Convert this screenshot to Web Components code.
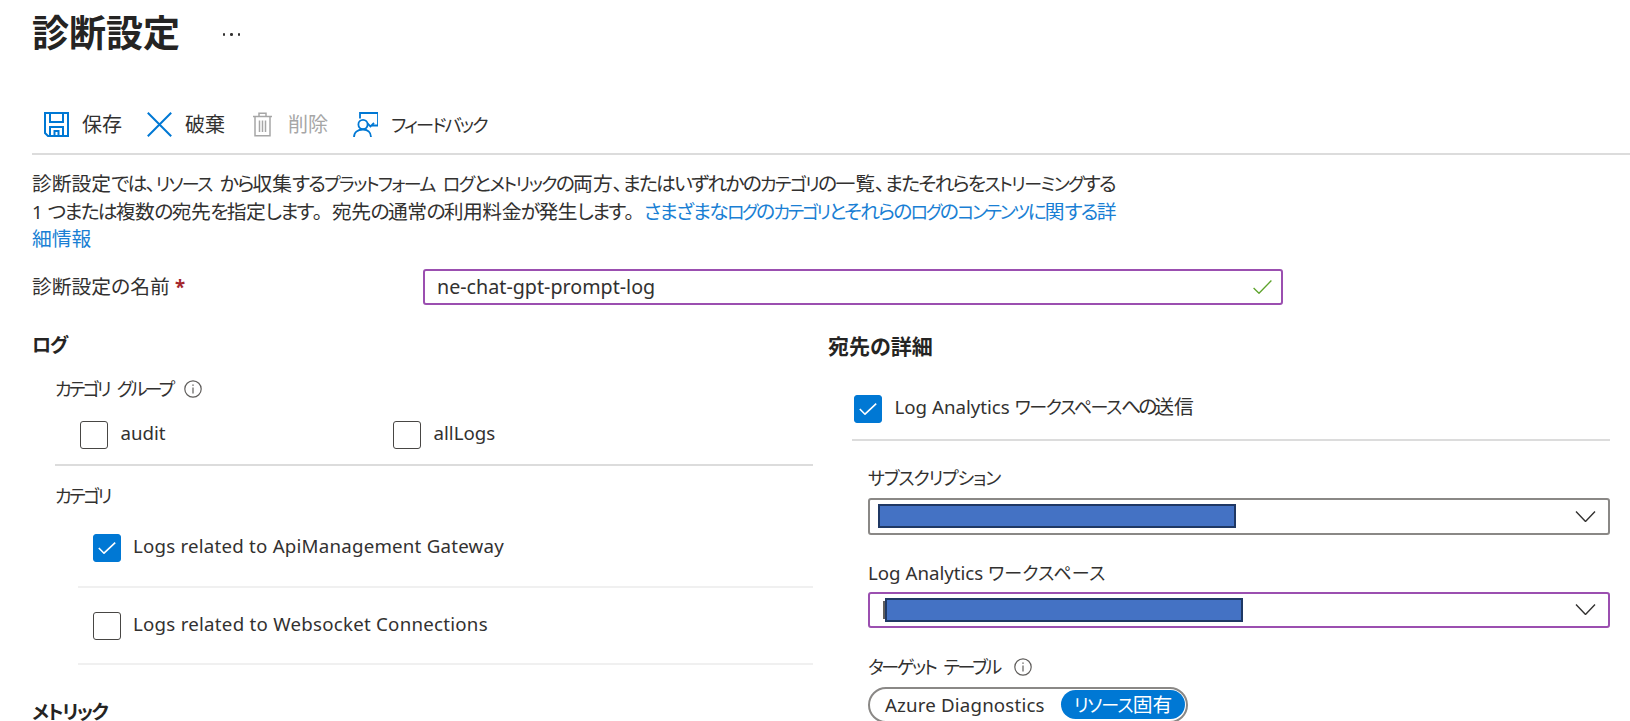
<!DOCTYPE html>
<html lang="ja">
<head>
<meta charset="utf-8">
<title>診断設定</title>
<style>
  html, body { margin: 0; height: 100%; background: #fff; overflow: hidden; }
  body { font: 400 19.8px/24px "Noto Sans", "Noto Sans CJK JP", sans-serif; color: #323130; font-feature-settings: "palt"; word-spacing: 3px; }
  .col { display: block; min-width: 0; }
  .h { font-size: 21px; font-weight: 700; line-height: 26px; color: #252423; --k: -1.5px; }
  .lab { line-height: 24px; }
  .lab-row { display: flex; align-items: center; }
  a { color: #1a7fd4; text-decoration: none; --k: -2.3px; }
  .star { color: #a4262c; font-weight: 700; margin-left: -3px; }
  .k { font-size: .91em; line-height: 1; letter-spacing: var(--k, 0); }
  .hi { letter-spacing: var(--h, 0); }
  .p { font-feature-settings: normal; }
  .l { font-size: var(--l, 18.7px); line-height: 1; letter-spacing: var(--ls, 0); word-spacing: 0; }
</style>
</head>
<body>
<template id="t-blade">
  <style>
    :host { display: block; height: 721px; overflow: hidden; padding-left: 32px; box-sizing: border-box; }
    .head { height: 108px; }
    .desc { padding-top: 15px; line-height: 27.5px; --k: -1.6px; --h: -1.8px; }
    .name { display: flex; margin-top: 16px; }
    .name ::slotted([slot=name-label]) { width: 391px; flex: none; align-self: center; }
    .cols { display: grid; grid-template-columns: 781px 782px; column-gap: 15px; }
  </style>
  <div class="head"><slot name="title"></slot></div>
  <slot name="toolbar"></slot>
  <div class="desc"><slot name="desc"></slot></div>
  <div class="name"><slot name="name-label"></slot><slot name="name-input"></slot></div>
  <div class="cols"><slot name="left"></slot><slot name="right"></slot></div>
</template>

<template id="t-title">
  <style>
    :host { display: flex; align-items: center; height: 66px; gap: 43px; }
    h1 { margin: 0; font-size: 37px; line-height: 66px; font-weight: 700; color: #252423; }
    .more { display: flex; gap: 5px; margin-top: 3px; }
    .more i { width: 2.4px; height: 2.4px; border-radius: 50%; background: #323130; display: block; }
  </style>
  <h1><slot></slot></h1>
  <div class="more"><i></i><i></i><i></i></div>
</template>

<template id="t-toolbar">
  <style>
    :host { display: flex; align-items: flex-start; gap: 25px; height: 41px; padding: 4px 0 0 12px; border-bottom: 2px solid #dcdcdc; }
  </style>
  <slot></slot>
</template>

<template id="t-tool">
  <style>
    :host { display: flex; align-items: center; gap: 13px; font-size: 20px; line-height: 25px; height: 25px; color: #323130; }
    :host([disabled]) { color: #a6a6a6; }
    ::slotted(svg) { width: 25px; height: 25px; flex: none; display: block; }
  </style>
  <slot name="icon"></slot><span><slot></slot></span>
</template>

<template id="t-input">
  <style>
    :host { display: flex; align-items: center; justify-content: space-between; width: 860px; height: 36px; box-sizing: border-box; border: 2px solid #9b4fb0; border-radius: 3px; padding: 0 9px 0 12px; --l: 19.7px; }
    svg { width: 19px; height: 14px; display: block; }
  </style>
  <span><slot></slot></span>
  <svg viewBox="0 0 19 14" fill="none" stroke="#5ea32c" stroke-width="1.3"><path d="M.6 8L6 13.3L18.4 .5"/></svg>
</template>

<template id="t-check">
  <style>
    :host { display: flex; align-items: center; gap: 12.5px; height: 28px; line-height: 24px; }
    .box { width: 28px; height: 28px; box-sizing: border-box; border: 1.7px solid #484644; border-radius: 3px; flex: none; display: flex; align-items: center; justify-content: center; }
    :host([checked]) .box { background: #0078d4; border-color: #0078d4; }
    svg { width: 18px; height: 12px; display: none; }
    :host([checked]) svg { display: block; }
    span { padding-bottom: 3px; }
  </style>
  <div class="box"><svg viewBox="0 0 18 12" fill="none" stroke="#fff" stroke-width="1.6"><path d="M.8 6L6 11.2L17.2 .6"/></svg></div>
  <span><slot></slot></span>
</template>

<template id="t-info">
  <style>
    :host { display: inline-flex; flex: none; width: 18px; height: 18px; }
    svg { width: 18px; height: 18px; display: block; }
  </style>
  <svg viewBox="0 0 18 18" fill="none" stroke="#605e5c" stroke-width="1.2"><circle cx="9" cy="9" r="8.2"/><path d="M9 7.6V13.4"/><path d="M9 4.4V5.8" stroke-width="1.4"/></svg>
</template>

<template id="t-select">
  <style>
    :host { display: flex; align-items: center; box-sizing: border-box; height: 37px; border: 2px solid #8a8886; border-radius: 3px; padding-left: 8px; }
    :host([focus]) { border-color: #9b4fb0; height: 36px; padding-left: 15px; }
    .redact { width: 358px; height: 24px; box-sizing: border-box; background: #4472c4; border: 2px solid #1f3864; }
    .sliver { display: none; width: 2px; height: 18px; background: #605e5c; margin-left: -2px; }
    :host([focus]) .sliver { display: block; }
    svg { width: 21px; height: 11px; margin-left: auto; margin-right: 12px; display: block; }
  </style>
  <div class="sliver"></div><div class="redact"></div>
  <svg viewBox="0 0 21 11" fill="none" stroke="#323130" stroke-width="1.4"><path d="M1 .5L10.5 10.5L20 .5"/></svg>
</template>

<template id="t-toggle">
  <style>
    :host { display: inline-flex; align-items: center; box-sizing: border-box; height: 36px; width: 320px; border: 2px solid #8a8886; border-radius: 18px; padding: 0 1px 0 15px; }
    .a { flex: 1; white-space: nowrap; }
    .b { background: #0078d4; color: #fff; border-radius: 15px; height: 29px; line-height: 29px; width: 124px; text-align: center; flex: none; }
  </style>
  <span class="a"><slot name="a"></slot></span><span class="b"><slot name="b"></slot></span>
</template>

<az-blade>
  <az-title slot="title">診断設定</az-title>
  <az-toolbar slot="toolbar">
    <az-tool>
      <svg slot="icon" viewBox="0 0 25 25" fill="none" stroke="#0078d4" stroke-width="2"><path d="M1 1H24V24H4L1 21Z"/><path d="M6 1V10H19V1"/><path d="M6 24V15H19V24"/><path d="M10.5 24V19H14.5V24"/></svg>保存
    </az-tool>
    <az-tool>
      <svg slot="icon" viewBox="0 0 25 25" fill="none" stroke="#0078d4" stroke-width="2"><path d="M.8 .8L24.2 24.2M24.2 .8L.8 24.2"/></svg>破棄
    </az-tool>
    <az-tool disabled>
      <svg slot="icon" viewBox="0 0 25 25" fill="none" stroke="#a6a6a6" stroke-width="1.5"><path d="M3 4.5H22"/><path d="M9 4.5V1.2H16V4.5"/><path d="M5 4.5V23.8H20V4.5"/><path d="M9.5 8.5V20M12.5 8.5V20M15.5 8.5V20"/></svg>削除
    </az-tool>
    <az-tool style="--k:-1.9px">
      <svg slot="icon" viewBox="0 0 25 25" fill="none" stroke="#0078d4" stroke-width="1.8"><path d="M7 6.5V1H25V13.5H19"/><path d="M14.5 11.5L17.5 14.5L21 11"/><circle cx="10" cy="12.5" r="4.6"/><path d="M1 25C1 20 5 17.5 10 17.5C14.5 17.5 18 20 18 25"/></svg><span>フィードバック</span>
    </az-tool>
  </az-toolbar>

  <div slot="desc">
    <span>診断設定では、リソース から収集するプラットフォーム ログとメトリックの両方、またはいずれかのカテゴリの一覧、またそれらをストリーミングする</span><br>
    <span style="letter-spacing:-.5px">1 つまたは複数の宛先を指定します。宛先の通常の利用料金が発生します。</span><a href="#">さまざまなログのカテゴリとそれらのログのコンテンツに関する詳<br>細情報</a>
  </div>

  <div slot="name-label">診断設定の名前 <span class="star">*</span></div>
  <az-input slot="name-input">ne-chat-gpt-prompt-log</az-input>

  <div slot="left" class="col">
    <div class="h" style="margin-top:26px">ログ</div>
    <div class="lab lab-row" style="margin:20px 0 0 23px;gap:11px;--k:-2.7px"><span>カテゴリ グループ</span><az-info></az-info></div>
    <div style="display:flex;margin:20px 0 0 48px">
      <az-check style="width:313px">audit</az-check>
      <az-check>allLogs</az-check>
    </div>
    <div style="height:2px;background:#dcdcdc;margin:15px 0 0 23px"></div>
    <div class="lab" style="margin:18px 0 0 23px;--k:-2.4px">カテゴリ</div>
    <az-check checked style="margin:26px 0 0 60.5px;--ls:.22px">Logs related to ApiManagement Gateway</az-check>
    <div style="height:2px;background:#f0f0f0;margin:24px 0 0 46px"></div>
    <az-check style="margin:24px 0 0 60.5px;--ls:.25px">Logs related to Websocket Connections</az-check>
    <div style="height:2px;background:#f0f0f0;margin:23px 0 0 46px"></div>
    <div class="h" style="margin-top:36px;line-height:20px">メトリック</div>
  </div>

  <div slot="right" class="col">
    <div class="h" style="margin-top:28px">宛先の詳細</div>
    <az-check checked style="margin:36px 0 0 26px;--k:-1.3px;--h:-3px">Log Analytics ワークスペースへの送信</az-check>
    <div style="height:2px;background:#dcdcdc;margin:16px 0 0 24px"></div>
    <div class="lab" style="margin:25px 0 0 40px;--k:-1.15px">サブスクリプション</div>
    <az-select style="margin:8px 0 0 40px"></az-select>
    <div class="lab" style="margin:26px 0 0 40px;--k:.25px">Log Analytics ワークスペース</div>
    <az-select focus style="margin:7px 0 0 40px"></az-select>
    <div class="lab lab-row" style="margin:27px 0 0 40px;gap:14px;--k:-2.3px"><span>ターゲット テーブル</span><az-info></az-info></div>
    <div style="margin:8px 0 0 40px;--k:-.9px;--ls:.17px"><az-toggle><span slot="a">Azure Diagnostics</span><span slot="b">リソース固有</span></az-toggle></div>
  </div>
</az-blade>

<script>
  const walker = document.createTreeWalker(document.querySelector('az-blade'), NodeFilter.SHOW_TEXT);
  const nodes = [];
  while (walker.nextNode()) nodes.push(walker.currentNode);
  const splitter = /([\u30A1-\u30FC]+|[\u3041-\u3096]+|。|[0-9A-Za-z*][0-9A-Za-z* \-]*)/;
  const classify = part => /^[\u30A1-\u30FC]/.test(part) ? 'k'
    : /^[\u3041-\u3096]/.test(part) ? 'hi'
    : part === '。' ? 'p'
    : /^[0-9A-Za-z*]/.test(part) ? 'l' : '';
  for (const n of nodes) {
    if (!n.nodeValue.trim() || !splitter.test(n.nodeValue)) continue;
    const frag = document.createDocumentFragment();
    for (const part of n.nodeValue.split(splitter)) {
      if (!part) continue;
      const cls = classify(part);
      if (cls) {
        const s = document.createElement('span');
        s.className = cls;
        s.textContent = part;
        frag.appendChild(s);
      } else frag.appendChild(document.createTextNode(part));
    }
    n.replaceWith(frag);
  }
  const reg = (name, tpl) => customElements.define(name, class extends HTMLElement {
    constructor() {
      super();
      this.attachShadow({ mode: 'open' }).appendChild(document.getElementById(tpl).content.cloneNode(true));
    }
  });
  reg('az-blade', 't-blade');
  reg('az-title', 't-title');
  reg('az-toolbar', 't-toolbar');
  reg('az-tool', 't-tool');
  reg('az-input', 't-input');
  reg('az-check', 't-check');
  reg('az-info', 't-info');
  reg('az-select', 't-select');
  reg('az-toggle', 't-toggle');
</script>
</body>
</html>
